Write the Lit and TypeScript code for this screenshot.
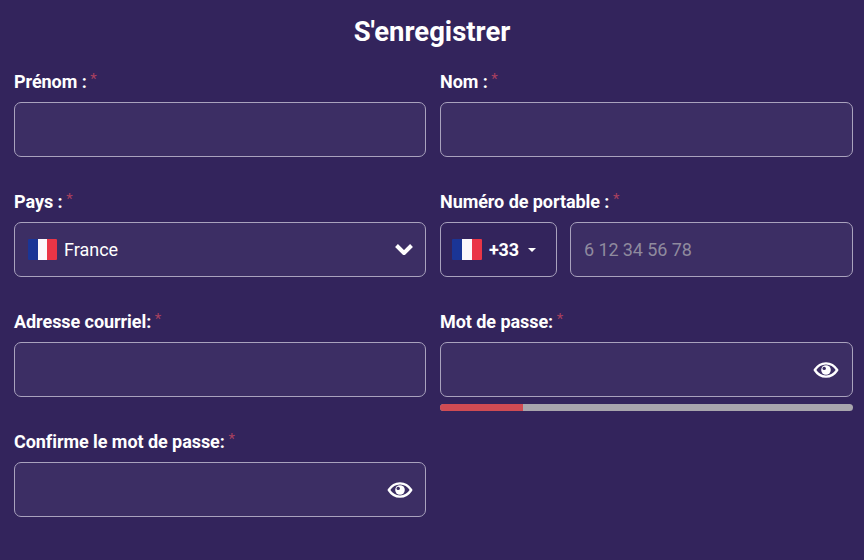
import { LitElement, html, css } from "lit";
import { customElement } from "lit/decorators.js";
import { classMap } from "lit/directives/class-map.js";

const flag = html`<span class="flag"><i class="b"></i><i class="w"></i><i class="r"></i></span>`;
const eye = (shift = false) => html`<svg class=${classMap({ eye: true, shift })} width="26" height="18" viewBox="0 0 26 18" fill="none">
  <path d="M1.8 9C4.5 4.8 8.4 2.4 13 2.4S21.5 4.8 24.2 9C21.5 13.2 17.6 15.6 13 15.6S4.5 13.2 1.8 9Z" stroke="#fff" stroke-width="2.4" stroke-linejoin="round"/>
  <circle cx="13" cy="9" r="4.8" fill="#fff"/>
  <circle cx="11.2" cy="7.4" r="1.7" fill="#3c2e64"/>
</svg>`;

@customElement("app-root")
export class AppRoot extends LitElement {
  static styles = css`
    :host {
      display: block;
      width: 864px;
      height: 560px;
      overflow: hidden;
      background: #33245c;
      font-family: Roboto, "Liberation Sans", sans-serif;
      color: #fff;
      box-sizing: border-box;
    }
    * { box-sizing: border-box; }
    h1 {
      margin: 0;
      height: 70px;
      padding-top: 16px;
      font-size: 27.5px;
      line-height: 32px;
      font-weight: 700;
      text-align: center;
      letter-spacing: 0;
    }
    .grid {
      display: grid;
      grid-template-columns: 412px 413px;
      column-gap: 14px;
      padding-left: 14px;
      grid-auto-rows: 120px;
    }
    .field { display: flex; flex-direction: column; }
    label {
      height: 32px;
      font-size: 18px;
      line-height: 24px;
      font-weight: 700;
      letter-spacing: -0.06px;
      display: block;
    }
    .star {
      color: #a8405f;
      font-weight: 400;
      font-size: 15px;
      position: relative;
      top: -4px;
    }
    .box {
      height: 55px;
      border: 1px solid #a9a2bd;
      border-radius: 7px;
      background: #3c2e64;
      display: flex;
      align-items: center;
      padding: 0 14px 0 13px;
      font-size: 18px;
    }
    .eye { margin-left: auto; margin-right: -1px; }
    .eye.shift { margin-right: -2px; }
    .flag {
      display: flex;
      width: 29px;
      height: 21px;
      margin-right: 7px;
      flex: none;
      border-radius: 1px;
      overflow: hidden;
    }
    .flag i { flex: 1; display: block; }
    .flag .b { background: #1a3596; }
    .flag .w { background: #fbf8fb; }
    .flag .r { background: #ea3546; }
    .chev { margin-left: auto; margin-right: -3px; }
    .phone { display: flex; gap: 13px; }
    .code {
      width: 117px;
      flex: none;
      background: #33245c;
      padding: 0 11px;
      font-weight: 700;
      letter-spacing: -0.2px;
    }
    .code .flag { width: 30px; margin-right: 7px; }
    .caret {
      width: 0;
      height: 0;
      border-left: 4px solid transparent;
      border-right: 4px solid transparent;
      border-top: 4px solid #fff;
      margin-left: 9px;
    }
    .num { flex: 1; color: #8f8a9e; letter-spacing: -0.09px; }
    .meter {
      height: 7px;
      margin-top: 7px;
      border-radius: 4px;
      background: #a8a5ad;
      overflow: hidden;
      flex: none;
    }
    .meter div { height: 100%; background: #d04b53; }
  `;

  private label(t: string) {
    return html`<label>${t}<span class="star"> *</span></label>`;
  }

  render() {
    return html`
      <h1>S'enregistrer</h1>
      <div class="grid">
        <div class="field">${this.label("Prénom :")}<div class="box"></div></div>
        <div class="field">${this.label("Nom :")}<div class="box"></div></div>
        <div class="field">${this.label("Pays :")}
          <div class="box">${flag}<span>France</span>
            <svg class="chev" width="20" height="13" viewBox="0 0 20 13" fill="none"><path d="M2.5 2.5 10 10l7.5-7.5" stroke="#fff" stroke-width="4" stroke-linejoin="round"/></svg>
          </div>
        </div>
        <div class="field">${this.label("Numéro de portable :")}
          <div class="phone">
            <div class="box code">${flag}<span>+33</span><span class="caret"></span></div>
            <div class="box num">6 12 34 56 78</div>
          </div>
        </div>
        <div class="field">${this.label("Adresse courriel:")}<div class="box"></div></div>
        <div class="field">${this.label("Mot de passe:")}
          <div class="box">${eye()}</div>
          <div class="meter"><div style="width:20%"></div></div>
        </div>
        <div class="field">${this.label("Confirme le mot de passe:")}<div class="box">${eye(true)}</div></div>
      </div>
    `;
  }
}
